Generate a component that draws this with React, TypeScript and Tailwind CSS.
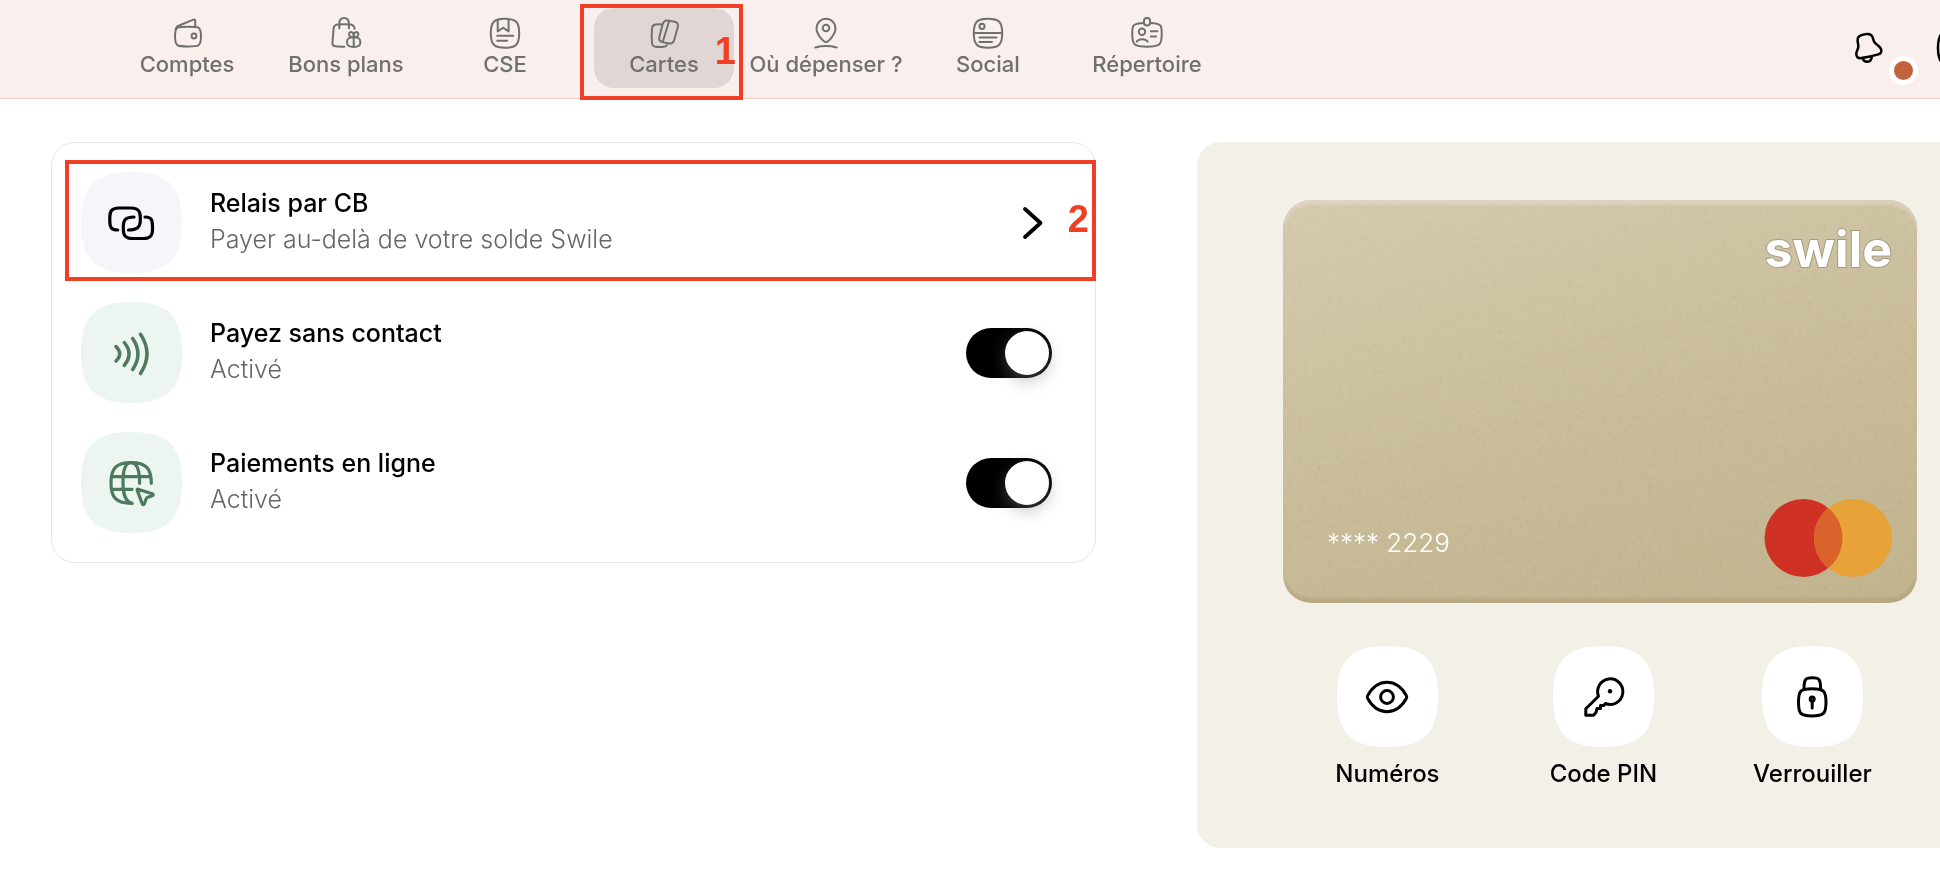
import { useState, type ReactNode } from 'react';
import clsx from 'clsx';

interface NavItem {
    label: string;
    icon: ReactNode;
    active?: boolean;
    wide?: boolean;
}

interface ToggleRowProps {
    id: string;
    title: string;
    icon: ReactNode;
}

const navItems: NavItem[] = [
    {
        label: 'Comptes',
        icon: (
            <>
                <path d="M4 19.5c0-6 .8-8.2 3-9.1 2.4-1 18-1 20 0 2.2.9 3 3.1 3 9.1s-.8 8-3 9c-2 1.2-17.6 1.2-20 0-2.2-1-3-3-3-9z" />
                <path d="M4.6 12.5c.5-2.3 1.7-3.3 3.6-4L22.4 2.6c1.2-.4 1.8 0 1.8 1.2v5.7" />
                <circle cx="23" cy="19" r="2.4" />
            </>
        ),
    },
    {
        label: 'Bons plans',
        icon: (
            <>
                <path d="M14.3 29.7c-4.3.1-8.3-.2-10-.7-1.6-.5-2-1.5-1.9-3l1.2-14.6c.3-2.6 1.4-3.8 4-4 4-.3 9.5-.3 13 0 2.3.2 3.5 1.5 4 4.3" />
                <path d="M9.3 11.3V7c0-4 1.7-6 4.8-6s4.8 2 4.8 6v4.3" />
                <path d="M23.7 20.3c-5 0-6.7 1.2-6.7 4.7s1.7 4.9 6.7 4.9 6.7-1.4 6.7-4.9-1.7-4.7-6.7-4.7z" />
                <path d="M23.7 20.3v9.4M23.7 20.3c-2.6 0-4.6-.9-4.6-3 0-1.6 1-2.3 2.1-2.3 1.7 0 2.5 2 2.5 5.3zM23.7 20.3c2.6 0 4.6-.9 4.6-3 0-1.6-1-2.3-2.1-2.3-1.7 0-2.5 2-2.5 5.3z" />
            </>
        ),
    },
    {
        label: 'CSE',
        icon: (
            <>
                <path d="M16 1.8C27 1.8 30.2 5 30.2 16.3S27 30.8 16 30.8 1.8 27.6 1.8 16.3 5 1.8 16 1.8z" />
                <path d="M8.7 3.5v11l5.3-3.8 5.6 3.8v-11M8.2 18.7h16M8.2 23.7h10" />
            </>
        ),
    },
    {
        label: 'Cartes',
        active: true,
        icon: (
            <>
                <path d="M19 28.2c-1 1.2-1.8 1.5-3.5 1.6-3.5.3-6.5.3-9-.3-1.7-.5-2.3-1.5-2.5-3.5-.5-4.5-.4-10 0-14.5.2-2.5 1.2-3.7 3.5-4 2-.3 4-.3 6.6-.1" />
                <path d="M14.6 7.5c.9-3.3 2.4-4.5 5.4-4l6.5 1.3c3 .7 4 2.2 3.3 5.2l-3.6 13c-.9 3-2.3 4-5.3 3.5L14.4 25c-3-.7-3.8-2-3.1-5zM21.2 4L14.7 25" />
            </>
        ),
    },
    {
        label: 'Où dépenser ?',
        wide: true,
        icon: (
            <>
                <path d="M16 25.2c-2.5 0-9.5-8-9.5-14a9.5 9.5 0 0 1 19 0c0 6-7 14-9.5 14z" />
                <circle cx="16" cy="11" r="3.3" />
                <path d="M5.3 30.5c6-1.6 15.4-1.6 21.4 0" />
            </>
        ),
    },
    {
        label: 'Social',
        icon: (
            <>
                <path d="M16 1.8C27 1.8 30.2 5 30.2 16.3S27 30.8 16 30.8 1.8 27.6 1.8 16.3 5 1.8 16 1.8z" />
                <circle cx="10" cy="9.3" r="2.6" />
                <path d="M2 16h28M7.5 20.4h17M7.5 25H20" />
            </>
        ),
    },
    {
        label: 'Répertoire',
        icon: (
            <>
                <path d="M13 5.9c-6.5.1-9.3.7-10.6 2.9C1.4 10.6 1.2 14 1.3 18c.1 5 .7 8 2.6 9.5 2.1 1.7 5.6 2.2 12.1 2.2s10-.5 12.1-2.2c1.9-1.5 2.5-4.5 2.6-9.5.1-4-.1-7.4-1.1-9.2-1.3-2.2-4.1-2.8-10.6-2.9" />
                <rect x="13" y="1" width="6" height="7.6" rx="2.8" />
                <circle cx="11" cy="14.7" r="3.2" />
                <path d="M5.8 24.6c2-3.3 8.8-3.3 10.8 0M19.8 14.3h6.6M19.8 19.4H25" />
            </>
        ),
    },
];

function Icon({ children, className = 'size-12', width = 3 }: { children: ReactNode; className?: string; width?: number }) {
    const size = className.includes('size-8') ? 32 : 48;
    return (
        <svg
            viewBox={`0 0 ${size} ${size}`}
            className={className}
            fill="none"
            stroke="currentColor"
            strokeWidth={width}
            strokeLinecap="round"
            strokeLinejoin="round"
            aria-hidden="true"
        >
            {children}
        </svg>
    );
}

/* Rounded "squircle" tile behind an icon */
function Tile({ children, className }: { children: ReactNode; className: string }) {
    return (
        <span className="grid size-[101px] shrink-0 place-items-center">
            <svg viewBox="0 0 100 100" className={clsx('col-start-1 row-start-1 size-full', className)} fill="currentColor" aria-hidden="true">
                <path d="M50 0C86 0 100 14 100 50S86 100 50 100 0 86 0 50 14 0 50 0z" />
            </svg>
            <span className="col-start-1 row-start-1">{children}</span>
        </span>
    );
}

function Marker({ value, className }: { value: string; className: string }) {
    return (
        <span
            className={clsx(
                'pointer-events-none absolute z-10 flex items-center justify-end border-4 border-[#ef4026] pr-[3px] pb-[3px] font-["Liberation_Sans",sans-serif] text-[38px] leading-none font-bold text-[#ef4026]',
                className,
            )}
        >
            {value}
        </span>
    );
}

function ToggleRow({ id, title, icon }: ToggleRowProps) {
    const [enabled, setEnabled] = useState(true);
    return (
        <div className="flex items-center gap-7">
            <Tile className="text-[#ecf5f0]">{icon}</Tile>
            <label htmlFor={id} className="flex-1 pb-[3px] text-[25px] leading-9">
                <span className="block font-medium text-black">{title}</span>
                <span className="block font-light text-[#666]">{enabled ? 'Activé' : 'Désactivé'}</span>
            </label>
            <input
                id={id}
                type="checkbox"
                role="switch"
                checked={enabled}
                onChange={(e) => setEnabled(e.target.checked)}
                className="flex h-[50px] w-[86px] cursor-pointer appearance-none items-center rounded-full bg-[#bbb] px-[3px] before:size-11 before:rounded-full before:bg-white before:shadow-[0_6px_16px_rgba(128,128,128,0.45)] checked:justify-end checked:bg-black"
            />
        </div>
    );
}

function CardAction({ label, children }: { label: string; children: ReactNode }) {
    return (
        <button type="button" className="flex cursor-pointer flex-col items-center gap-[9px]">
            <Tile className="text-white">
                <Icon>{children}</Icon>
            </Tile>
            <span className="text-2xl leading-9 font-medium">{label}</span>
        </button>
    );
}

export default function App() {
    return (
        <div className="min-h-screen overflow-x-hidden bg-white font-[Inter,sans-serif] text-black">
            <header className="flex items-start justify-between border-b border-[#f2cfc5] bg-[#f9efec] pt-2 pb-[10px] pl-[117px]">
                <nav className="flex gap-[19px]">
                    {navItems.map((item) => (
                        <a
                            key={item.label}
                            href="#"
                            className={clsx(
                                'relative flex h-20 flex-col items-center rounded-[20px] pt-[9px] text-[22px] leading-[30px] font-medium whitespace-nowrap text-[#70706e]',
                                item.wide ? 'w-[146px]' : 'w-[140px]',
                                item.active && 'bg-[#e0d7d4]',
                            )}
                        >
                            <Icon className="size-8 shrink-0" width={2}>
                                {item.icon}
                            </Icon>
                            {item.label}
                            {item.active && <Marker value="1" className="-top-1 -right-[9px] -left-[14px] h-[96px]" />}
                        </a>
                    ))}
                </nav>
                <div className="flex shrink-0 pt-4">
                    <button type="button" aria-label="Notifications" className="relative mr-10 size-12 cursor-pointer">
                        <Icon width={2.5}>
                            <path d="M14.3 21c-.8-3-1.3-6 .2-8 1.8-2.3 9.5-4 12.5-2 2.3 1.5 1.8 4.5 3.3 7 1.7 2.7 6.2 4.3 6.9 7.5.6 2.6-.6 4.2-2.9 4.9-5.5 1.7-11.5 3-17 3.7-3.5.4-5-1.3-5-4.3 0-3.3 2.6-4.5 2-8.8z" />
                            <path d="M18.7 34.3c.8 2.5 2.5 3.7 4.8 3.5 2.3-.3 4-2 4.2-5" />
                        </Icon>
                        <span className="absolute top-8 left-[45px] size-[29px] rounded-full border-[5px] border-white bg-[#c4623f]" />
                    </button>
                    <button type="button" aria-label="Aide" className="-mr-10 size-12 cursor-pointer">
                        <Icon width={2.5}>
                            <path d="M24 6c14 0 18 4 18 18s-4 18-18 18S6 38 6 24 10 6 24 6z" />
                        </Icon>
                    </button>
                </div>
            </header>

            <main className="-mr-[63px] grid grid-cols-[35fr_27fr] items-start gap-[101px] pt-[43px] pb-9 pl-[51px]">
                <section className="relative flex flex-col gap-[29px] rounded-3xl border border-[#e6e6e6] py-[29px] pr-[43px] pl-[29px]">
                    <a href="#" className="flex items-center gap-7 text-[25px] leading-9">
                        <Tile className="text-[#f4f6fa]">
                            <Icon width={3.2}>
                                <path d="M9.7 31C3.5 31 1.8 28.5 1.8 22v-4c0-6.5 2.4-9 9-9h12.5c6.6 0 9 2.5 9 9v3c0 7.5-3.3 10-11.8 10" />
                                <path d="M26 18c-8 0-10.7 2.5-10.7 10v2.5c0 6.5 2.4 9 9 9h11.4c6.5 0 8.8-2.5 8.8-9V27c0-6.5-1.5-9-7.5-9" />
                            </Icon>
                        </Tile>
                        <span className="flex-1 pb-[3px]">
                            <span className="block font-medium">Relais par CB</span>
                            <span className="block font-light text-[#666]">Payer au-delà de votre solde Swile</span>
                        </span>
                        <svg viewBox="0 0 22 36" className="mr-2 h-9 w-[22px]" fill="none" stroke="currentColor" strokeWidth="3.8" strokeLinecap="round" strokeLinejoin="round" aria-hidden="true">
                            <path d="M3 4l15.5 14L3 32" />
                        </svg>
                    </a>
                    <Marker value="2" className="top-[17px] -right-px left-[13px] h-[121px]" />

                    <ToggleRow
                        id="contactless"
                        title="Payez sans contact"
                        icon={
                            <Icon className="size-12 text-[#4d795e]" width={3.5}>
                                <path d="M8 17.5q7.5 7.3 0 14.5M16.3 13.5q9.5 11.4 0 22.8M24.7 9.5q10.5 15.5 0 31M32.5 5.3q13 19.5 0 39.2" />
                            </Icon>
                        }
                    />
                    <ToggleRow
                        id="online"
                        title="Paiements en ligne"
                        icon={
                            <Icon className="size-12 text-[#4d795e]" width={3.2}>
                                <g transform="translate(-1 0)">
                                    <path d="M25 44.3C9 44.3 4 38.5 4 24S9 3.7 24 3.7s20.3 5.8 20.3 20.6" />
                                    <path d="M24 3.7c-6 0-8 9-8 19.3 0 11 1.5 19.5 9 21.3M24 3.7c6 0 8.6 9 8.6 20.6M4.8 17.7h38.5M4.8 30.3H25" />
                                    <path d="M31 30.2l14.3 4.6c1.2.5 1.2 1.6 0 2l-4.3 1.4c-1.2.4-1.6.9-2 2l-1.7 4.8c-.4 1-1.6 1-2 0l-5-13.6c-.3-.9-.1-1.4.7-1.2z" />
                                </g>
                            </Icon>
                        }
                    />
                </section>

                <section className="rounded-3xl bg-[#f3f0e8] px-[86px] pt-[58px] pb-14">
                    <div className="relative flex aspect-[634/403] flex-col justify-between overflow-hidden rounded-[28px] bg-linear-165 from-[#d3c9ad] via-[#c8bc98] to-[#bfb28c] pt-[22px] pr-[25px] pb-[26px] pl-11 text-white">
                        {/* Brushed grain of the card */}
                        <svg className="absolute inset-0 size-full opacity-10 mix-blend-soft-light" aria-hidden="true">
                            <filter id="grain">
                                <feTurbulence type="fractalNoise" baseFrequency="0.2" numOctaves="2" />
                                <feColorMatrix values="1.5 0 0 0 -.25 1.5 0 0 0 -.25 1.5 0 0 0 -.25 0 0 0 0 1" />
                            </filter>
                            <rect width="100%" height="100%" filter="url(#grain)" />
                        </svg>
                        <span className="absolute inset-0 rounded-[28px] shadow-[inset_0_5px_3px_rgba(233,222,210,0.5),inset_0_-5px_3px_rgba(160,142,105,0.35)]" />
                        <div className="relative text-right text-[50px] leading-[54px] font-bold [-webkit-text-stroke:2px_#a59c83] [paint-order:stroke_fill]">swile</div>
                        <div className="relative flex items-center justify-between">
                            <span className="pt-2 text-[26px] font-light">**** 2229</span>
                            <svg viewBox="0 0 128 78" className="h-[78px] w-32" role="img" aria-label="Mastercard">
                                <circle cx="39.5" cy="39" r="39" fill="#cf3125" />
                                <circle cx="89" cy="39" r="39" fill="#e8a23a" />
                                <path d="M64.25 8.9a39 39 0 0 1 0 60.2 39 39 0 0 1 0-60.2z" fill="#da622b" />
                            </svg>
                        </div>
                    </div>

                    <div className="mt-[43px] grid grid-cols-[15fr_16fr_14fr] pr-[7px]">
                        <CardAction label="Numéros">
                            <path d="M4.7 22.5C9.5 14 16.5 9.3 24 9.3s14.5 4.7 19.3 13.2c.6 1 .6 2 0 3C38.5 34 31.5 38.7 24 38.7S9.5 34 4.7 25.5c-.6-1-.6-2 0-3z" />
                            <circle cx="24" cy="24" r="6.4" />
                        </CardAction>
                        <CardAction label="Code PIN">
                            <path d="M19.5 23.3a12.6 12.8 0 1 1 7 7.2L24.8 32.5H21.5v3H18l-1 4-2.5 2.8H6.8v-6.5z" />
                            <circle cx="31" cy="18.3" r="2.2" fill="currentColor" stroke="none" />
                        </CardAction>
                        <CardAction label="Verrouiller">
                            <path d="M24 15.7c11.5 0 14 2 14 13.5S35.5 43 24 43 10.5 40.7 10.5 29.2 12.5 15.7 24 15.7z" />
                            <path d="M16 16.2c0-9.7 1-11.5 8.3-11.5s8.3 1.8 8.3 11.5" />
                            <circle cx="24.2" cy="26" r="2" />
                            <path d="M24.2 28v7" />
                        </CardAction>
                    </div>
                </section>
            </main>
        </div>
    );
}
